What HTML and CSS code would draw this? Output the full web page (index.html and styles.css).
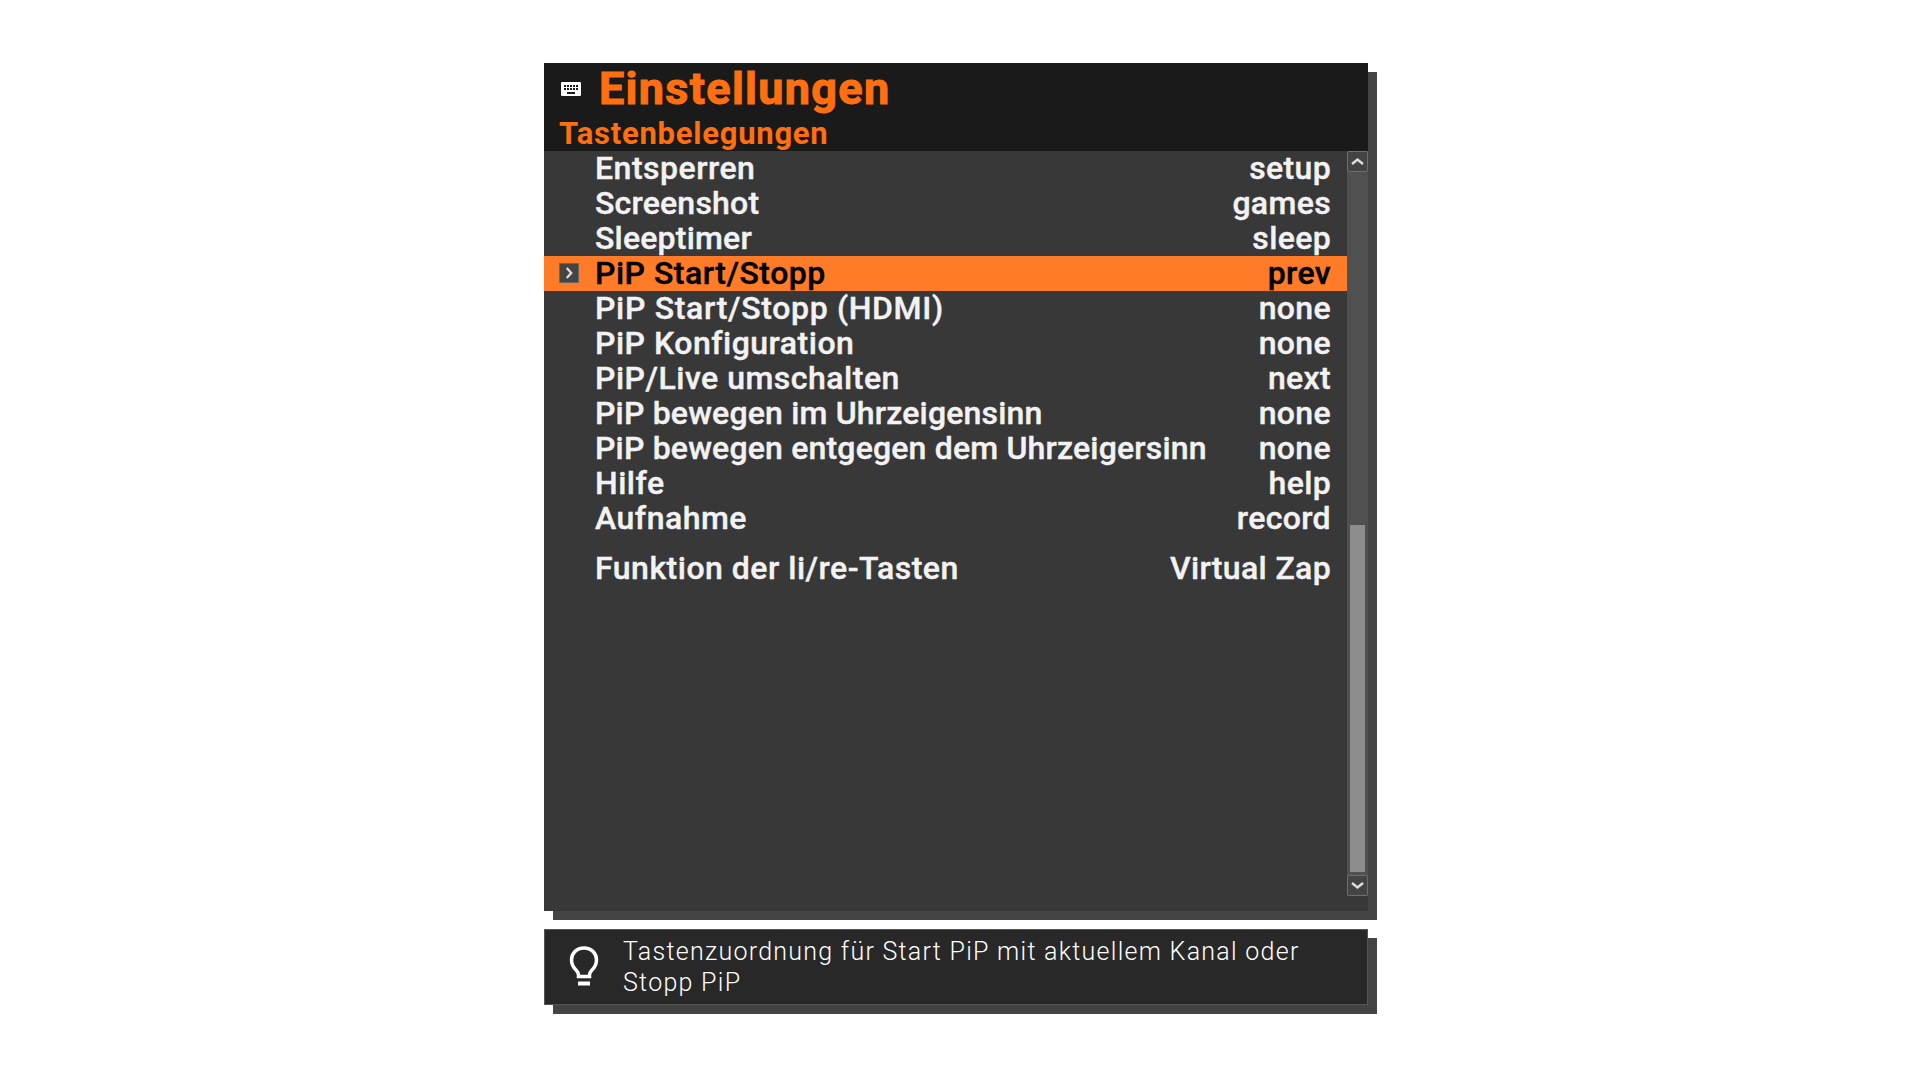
FILE: index.html
```html
<!DOCTYPE html>
<html lang="de">
<head>
    <meta charset="UTF-8">
    <title>Einstellungen</title>
    <link rel="stylesheet" href="styles.css">
</head>
<body>

<div class="screen">
    <div class="panel">
        <div class="header">
            <div class="title-row">
                <svg class="kbd-icon" viewBox="0 0 20 14" width="20" height="14">
                    <path fill="#fff" fill-rule="evenodd" d="M1 0h18a1 1 0 0 1 1 1v12a1 1 0 0 1-1 1H1a1 1 0 0 1-1-1V1a1 1 0 0 1 1-1zM3 3v2h2V3zm3 0v2h2V3zm3 0v2h2V3zm3 0v2h2V3zm3 0v2h2V3zM3 6v2h2V6zm3 0v2h2V6zm3 0v2h2V6zm3 0v2h2V6zm3 0v2h2V6zM6 10v2h8v-2z"/>
                </svg>
                <h1>Einstellungen</h1>
            </div>
            <h2>Tastenbelegungen</h2>
        </div>
        <div class="body">
            <div class="list">
                <div class="row"><span class="mark"></span><span class="label">Entsperren</span><span class="value">setup</span></div>
                <div class="row"><span class="mark"></span><span class="label short">Screenshot</span><span class="value">games</span></div>
                <div class="row"><span class="mark"></span><span class="label short">Sleeptimer</span><span class="value">sleep</span></div>
                <div class="row selected">
                    <span class="mark">
                        <svg viewBox="0 0 20 20" width="20" height="20"><path d="M7.500 4.500l5 5.500-5 5.500" fill="none" stroke="#ddd" stroke-width="2.500"/></svg>
                    </span>
                    <span class="label">PiP Start/Stopp</span><span class="value">prev</span>
                </div>
                <div class="row"><span class="mark"></span><span class="label wide">PiP Start/Stopp (HDMI)</span><span class="value">none</span></div>
                <div class="row"><span class="mark"></span><span class="label">PiP Konfiguration</span><span class="value">none</span></div>
                <div class="row"><span class="mark"></span><span class="label">PiP/Live umschalten</span><span class="value">next</span></div>
                <div class="row"><span class="mark"></span><span class="label tight">PiP bewegen im Uhrzeigensinn</span><span class="value">none</span></div>
                <div class="row"><span class="mark"></span><span class="label tight">PiP bewegen entgegen dem Uhrzeigersinn</span><span class="value">none</span></div>
                <div class="row"><span class="mark"></span><span class="label">Hilfe</span><span class="value">help</span></div>
                <div class="row"><span class="mark"></span><span class="label">Aufnahme</span><span class="value">record</span></div>
                <div class="row row-gap"><span class="mark"></span><span class="label">Funktion der li/re-Tasten</span><span class="value">Virtual Zap</span></div>
            </div>
            <div class="scrollbar">
                <div class="scroll-btn">
                    <svg viewBox="0 0 21 21" width="21" height="21"><path d="M5 13l5.500-4.500 5.500 4.500" fill="none" stroke="#ddd" stroke-width="2.500"/></svg>
                </div>
                <div class="track"><div class="thumb"></div></div>
                <div class="scroll-btn">
                    <svg viewBox="0 0 21 21" width="21" height="21"><path d="M5 8l5.500 4.500 5.500-4.500" fill="none" stroke="#ddd" stroke-width="2.500"/></svg>
                </div>
            </div>
        </div>
    </div>

    <div class="hint">
        <svg class="bulb" viewBox="0 0 32 44" width="32" height="44">
            <path d="M16 3C8.500 3 3.500 8.500 3.500 15c0 4.500 2 7.500 4.500 10 1.500 1.500 2.500 3 2.500 5v1.500h11V30c0-2 1-3.500 2.500-5 2.500-2.500 4.500-5.500 4.500-10C28.500 8.500 23.500 3 16 3z" fill="none" stroke="#fff" stroke-width="3.500"/>
            <path d="M10 38.500h12" fill="none" stroke="#fff" stroke-width="4"/>
        </svg>
        <p>Tastenzuordnung für Start PiP mit aktuellem Kanal oder Stopp PiP</p>
    </div>
</div>

</body>
</html>
```

FILE: styles.css
```css
* {
    margin: 0;
    padding: 0;
    box-sizing: border-box;
}

body {
    background: #fff;
    font-family: 'Roboto', sans-serif;
    color: #f2f2f2;
}

.screen {
    width: 824px;
    margin-left: 544px;
    padding: 63px 0 75px;
    display: flex;
    flex-direction: column;
    gap: 18px;
}

.panel {
    height: 848px;
    background: #383838;
    box-shadow: 9px 9px 0 #444;
    display: flex;
    flex-direction: column;
}

.header {
    height: 88px;
    background: #1a1a1a;
    color: #ff6f10;
}

.title-row {
    display: flex;
    align-items: center;
    height: 52px;
    padding-left: 17px;
}

.kbd-icon {
    margin-right: 18px;
}

h1 {
    font-size: 45px;
    font-weight: 700;
    letter-spacing: 1.3px;
    line-height: 52px;
    -webkit-text-stroke: 1px #ff6f10;
}

h2 {
    font-size: 31px;
    font-weight: 700;
    letter-spacing: 0.75px;
    line-height: 36px;
    padding-top: 1px;
    padding-left: 15px;
}

.body {
    flex: 1;
    display: flex;
}

.list {
    flex: 1;
}

.row {
    display: flex;
    align-items: center;
    height: 35px;
    font-size: 32px;
    font-weight: 500;
    line-height: 33px;
    letter-spacing: 0.5px;
    -webkit-text-stroke: 0.4px;
    padding-right: 16px;
    padding-bottom: 2px;
}

.row-gap {
    margin-top: 15px;
}

.mark {
    width: 51px;
    padding-left: 15px;
    display: flex;
}

.mark svg {
    background: #444;
    border: 1px solid #666;
}

.label {
    flex: 1;
    margin-top: 2px;
}

.value {
    margin-top: 2px;
    letter-spacing: 0.35px;
}

.tight {
    letter-spacing: 0.18px;
}

.short {
    letter-spacing: 0.2px;
}

.wide {
    letter-spacing: 0.67px;
}

.selected {
    background: #ff7b27;
    color: #000;
}

.scrollbar {
    width: 21px;
    height: 745px;
    display: flex;
    flex-direction: column;
    background: #505050;
}

.scroll-btn {
    height: 21px;
    background: #444;
    border: 1px solid #6e6e6e;
    border-radius: 2px;
    display: flex;
    justify-content: center;
    align-items: center;
}

.scroll-btn svg {
    flex: none;
}

.track {
    flex: 1;
    padding: 353px 3px 3px;
    display: flex;
}

.thumb {
    flex: 1;
    background: #8c8c8c;
}

.hint {
    height: 76px;
    background: #282828;
    border: 1px solid #555;
    box-shadow: 9px 9px 0 #444;
    display: flex;
    align-items: center;
}

.bulb {
    margin-left: 23px;
    flex: none;
}

.hint p {
    margin-left: 23px;
    width: 690px;
    font-size: 25px;
    font-weight: 300;
    letter-spacing: 1.27px;
    line-height: 31px;
    color: #fff;
}
```
